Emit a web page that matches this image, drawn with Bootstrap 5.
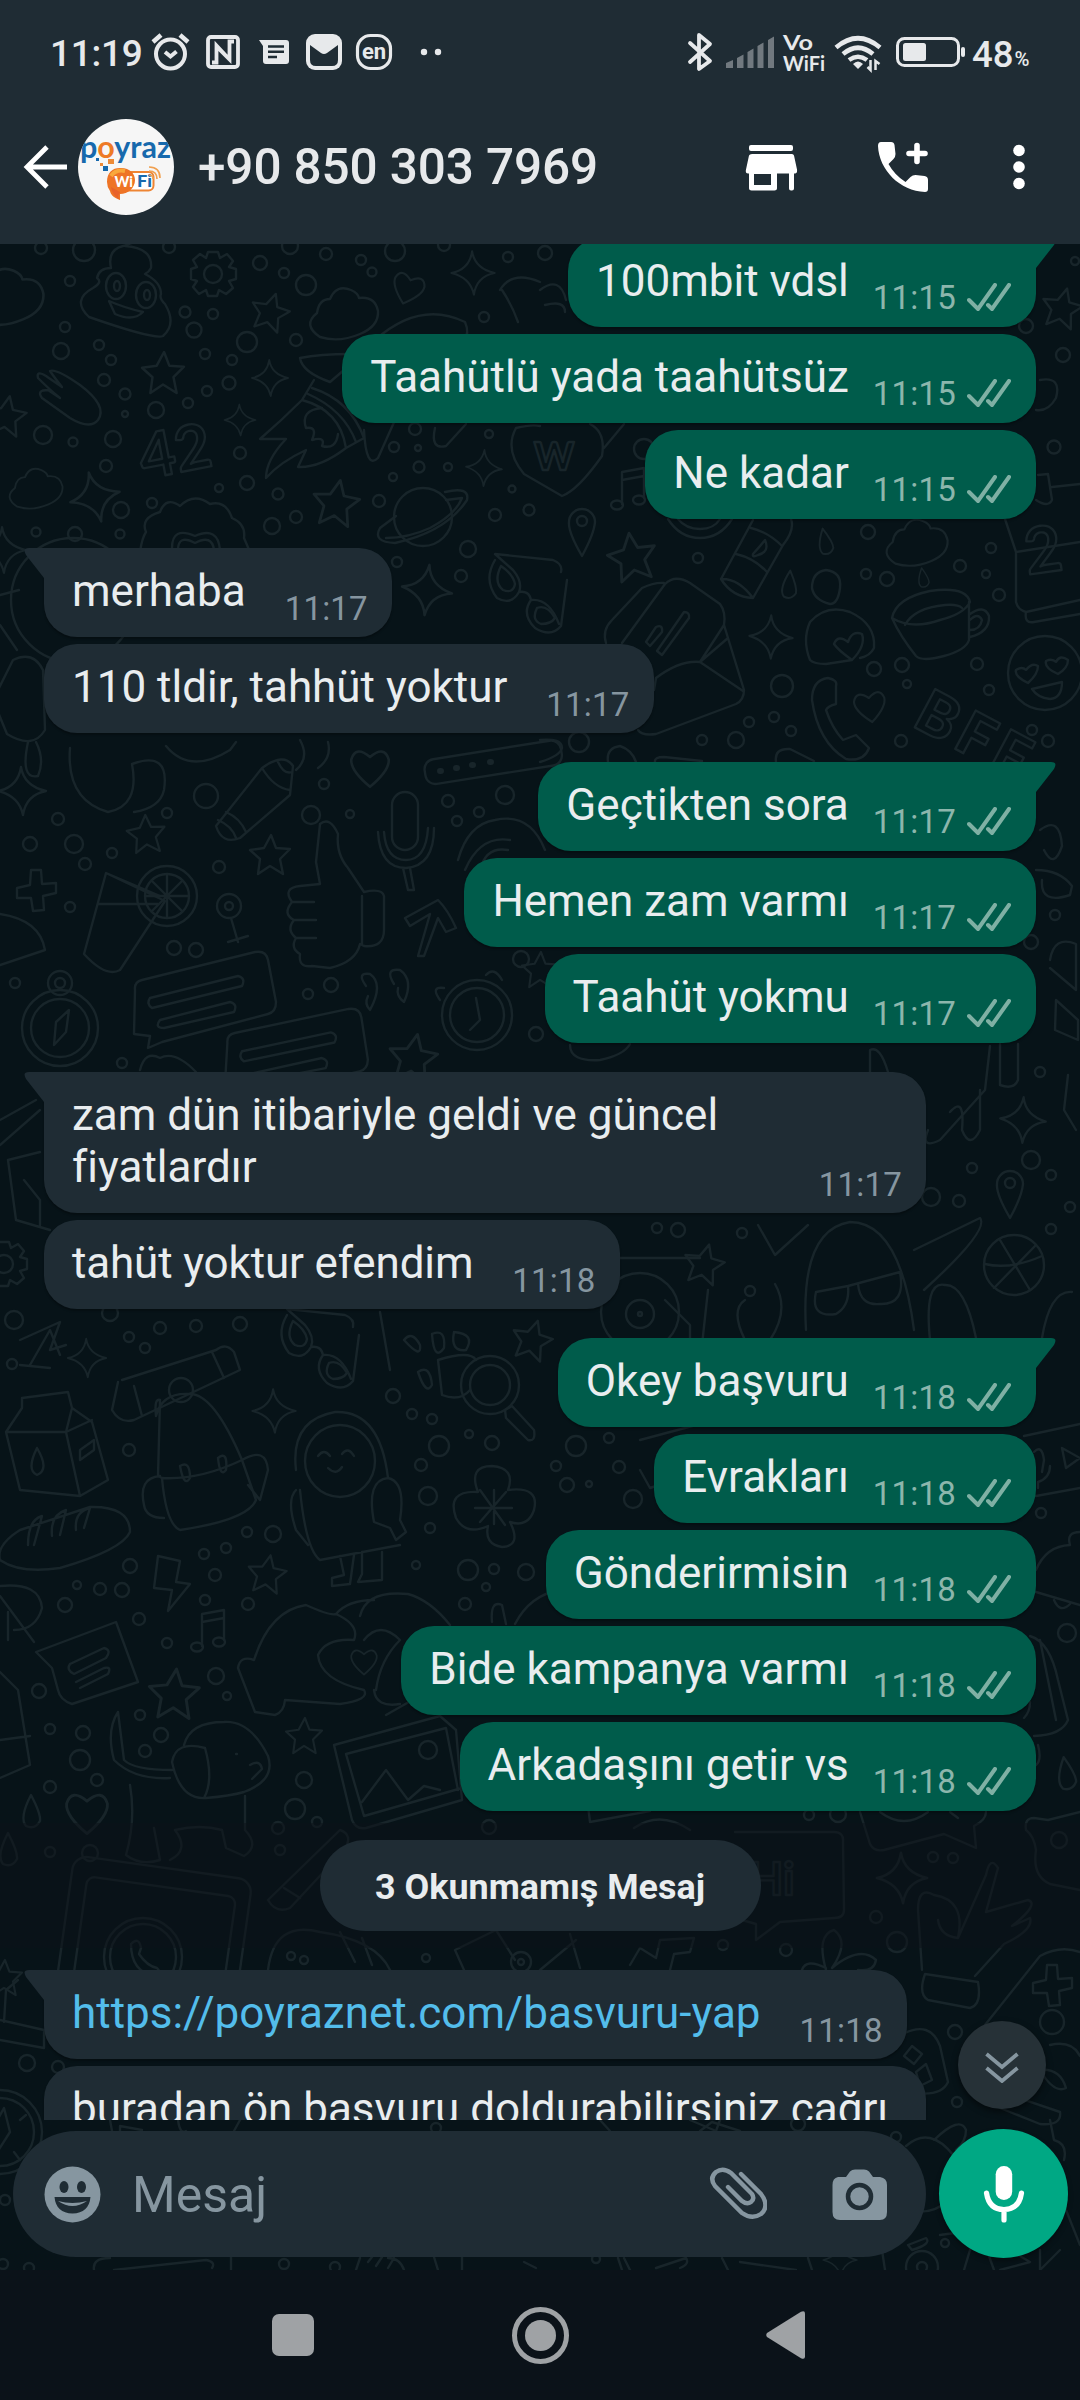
<!DOCTYPE html>
<html lang="tr" data-bs-theme="dark">
<head>
<meta charset="utf-8">
<meta name="viewport" content="width=device-width, initial-scale=1">
<title>Sohbet</title>
<link rel="stylesheet" href="https://cdn.jsdelivr.net/npm/bootstrap@5.3.0/dist/css/bootstrap.min.css">
<style>
  :root { --panel:#1f2c34; --paper:#071318; --out:#005c4b; --ink:#e9edef; --muted:#8696a0; }
  body { width:1080px; height:2400px; margin:0; overflow:hidden; background:#0b1219; color:var(--ink); font-family:Roboto,"Noto Sans",sans-serif; }
  svg { display:block; flex:none; }
  .status-row svg { overflow:visible; }
  .top-panel { background:var(--panel); height:244px; position:relative; z-index:3; color:#e7e9eb; }
  .status-row { height:104px; padding-left:50px; }
  .clock { font-size:37px; font-weight:500; line-height:40px; width:101px; padding-top:4px; letter-spacing:-.3px; }
  .app-row { height:126px; padding-left:20px; }
  .avatar { margin-left:8px; }
  .peer { font-size:49.5px; font-weight:500; line-height:58px; margin-left:24px; width:547px; white-space:nowrap; letter-spacing:-.12px; }
  .chat { height:2026px; background:var(--paper); overflow:hidden; }
  .doodles { position:absolute; left:0; top:0; fill:none; stroke:#18252a; stroke-width:2.4; stroke-linejoin:round; stroke-linecap:round; }
  .feed { height:1876px; overflow:hidden; position:relative; padding:0 44px; margin-top:0; }
  .feed-inner { margin-top:-6px; gap:7px; }
  .bubble { background:var(--panel); border-radius:33px; padding:17px 24px 0 28px; position:relative; box-shadow:0 2px 2px rgba(0,0,0,.28); min-height:89px; flex:none; }
  .bubble.sent { background:var(--out); align-self:flex-end; padding-right:25px; }
  .bubble.received { align-self:flex-start; }
  .bubble p { font-size:44px; line-height:52px; margin:0 0 20px; white-space:nowrap; }
  .bubble p.snug { letter-spacing:-.15px; }
  .stamp { font-size:33px; line-height:39px; margin:0 0 9px 39px; color:var(--muted); letter-spacing:.2px; }
  .sent .stamp { color:#8cb6ac; margin-left:24px; margin-bottom:10px; }
  .sent .stamp svg { margin-left:11px; margin-bottom:2px; }
  .turn { margin-top:22px; }
  .received.turn { border-top-left-radius:0; }
  .sent.turn { border-top-right-radius:0; }
  .tail { position:absolute; top:0; width:30px; height:30px; }
  .received .tail { left:-20px; fill:var(--panel); }
  .sent .tail { right:-20px; fill:var(--out); }
  .wide { width:882px; }
  .unread { margin:22px -44px 32px; position:relative; }
  .unread::before { content:""; position:absolute; inset:-17px 0; background:rgba(12,17,23,.5); }
  .unread span { position:relative; background:var(--panel); width:441px; height:91px; border-radius:46px; font-size:35.9px; font-weight:700; line-height:95px; text-align:center; }
  .chat-link { color:#53bdeb; text-decoration:none; }
  .composer { position:relative; padding:9px 12px 0 13px; }
  .entry { width:913px; height:126px; border-radius:63px; background:var(--panel); padding-left:31px; padding-right:38px; margin-top:2px; color:var(--muted); font-size:50px; }
  .entry .hint { margin-left:31px; padding-top:3px; }
  .mic-btn { width:129px; height:129px; border-radius:50%; background:#00a884; box-shadow:0 3px 5px rgba(0,0,0,.35); }
  .jump-btn { position:absolute; right:34px; top:1777px; width:88px; height:88px; border-radius:50%; background:#263137; box-shadow:0 3px 6px rgba(0,0,0,.5); }
  .sys-nav { height:130px; padding:0 275px 0 272px; fill:#9fa2a5; }
</style>
<script src="https://cdn.jsdelivr.net/npm/bootstrap@5.3.0/dist/js/bootstrap.bundle.min.js"></script>
</head>
<body>
<svg width="0" height="0" class="position-absolute">
  <defs>
    <symbol id="ticks" viewBox="0 0 44 28"><path d="M2 17L11 26L28 2M21 22L25 26L42 2" fill="none" stroke="#7fb0a4" stroke-width="4" stroke-linecap="round"/></symbol>
    <symbol id="tail-l" viewBox="0 0 30 30"><path d="M30 0H5Q-2 0 2 7L20 30H30Z"/></symbol>
    <symbol id="tail-r" viewBox="0 0 30 30"><path d="M0 0H25Q32 0 28 7L10 30H0Z"/></symbol>
  </defs>
</svg>

<header class="top-panel">
  <div class="status-row d-flex align-items-center">
    <div class="clock">11:19</div>
    <svg width="40" height="40" viewBox="151 32 40 40" fill="none" stroke="#e7e9eb"><circle cx="170.500" cy="54" r="14.500" stroke-width="4"/><path d="M165 52l5.500 4.500 6-5" stroke-width="4"/><path d="M153 42l8-7M188 42l-8-7" stroke-width="4.500"/></svg>
    <svg style="margin-left:14px" width="36" height="40" viewBox="205 32 36 40" fill="none" stroke="#e7e9eb"><rect x="208" y="37" width="30" height="30" rx="3" stroke-width="3.800"/><path d="M212 62.500h4.500v-17l13 14M234 41.500h-4.500v18l-13-13" stroke-width="3.800"/></svg>
    <svg style="margin-left:18px" width="31" height="40" viewBox="259 32 31 40"><path fill="#e7e9eb" d="M259 40h27q3 0 3 3v18q0 3-3 3h-20q-3 0-3-3V46z"/><path d="M268 46.500h16M268 51.700h16M268 57h9" stroke="#1f2c34" stroke-width="2.500"/></svg>
    <svg style="margin-left:16px" width="36" height="40" viewBox="306 32 36 40"><rect x="306" y="34" width="36" height="36" rx="9" fill="#e7e9eb"/><path d="M310 45L321 53Q324 55 327 53L338 45V60Q338 66 332 66H316Q310 66 310 60Z" fill="#1f2c34"/></svg>
    <svg style="margin-left:14px" width="36" height="40" viewBox="356 32 36 40"><rect x="357.500" y="35.500" width="33" height="33" rx="13" fill="none" stroke="#e7e9eb" stroke-width="3.200"/><text x="374" y="58.500" text-anchor="middle" font-family="Roboto" font-weight="700" font-size="22" fill="#e7e9eb">en</text></svg>
    <svg style="margin-left:28px" width="24" height="40" viewBox="420 32 24 40" fill="#e7e9eb"><circle cx="424" cy="52" r="3.200"/><circle cx="438" cy="52" r="3.200"/></svg>
    <svg style="margin-left:243px" width="26" height="40" viewBox="687 32 26 40" fill="none" stroke="#e7e9eb" stroke-width="3.800" stroke-linecap="round" stroke-linejoin="round"><path d="M690 43L710 61L699 69V35L710 44L690 62"/></svg>
    <svg style="margin-left:13px" width="48" height="40" viewBox="726 32 48 40" fill="#71797f"><path d="M726 63l7-3v8h-7zM737 58l6.500-3.500V68H737zM747.500 52l6-3.500V68h-6zM757.500 46l6-3.500V68h-6zM768 40l6-3.500V68h-6z"/></svg>
    <svg style="margin-left:9px" width="43" height="40" viewBox="783 32 43 40" fill="#e7e9eb" font-family="Lato" font-weight="700"><text x="783" y="49.500" font-size="21" textLength="30" lengthAdjust="spacingAndGlyphs">Vo</text><text x="783" y="70.500" font-size="21" textLength="42" lengthAdjust="spacingAndGlyphs">WiFi</text></svg>
    <svg style="margin-left:8px" width="48" height="40" viewBox="834 32 48 40" fill="none" stroke="#e7e9eb" stroke-width="4.600"><path d="M836 47.500Q858 29 880 47.500M843 54Q858 41.500 873 54M849 60Q858 53.500 867 60"/><path d="M858 69l-5-5q5-5 10 0z" fill="#e7e9eb" stroke="none"/><path d="M870.500 60v10l-3-3M875.500 70v-9l4 3" stroke-width="2.500"/></svg>
    <svg style="margin-left:14px" width="70" height="40" viewBox="896 32 70 40"><rect x="897.500" y="38.500" width="61" height="27" rx="7" fill="none" stroke="#e7e9eb" stroke-width="3"/><rect x="903" y="43" width="23" height="18" rx="2.500" fill="#e7e9eb"/><rect x="961" y="47" width="4" height="10" rx="2" fill="#e7e9eb"/></svg>
    <svg style="margin-left:6px" width="62" height="40" viewBox="972 32 62 40" fill="#e7e9eb" font-family="Roboto" font-weight="500"><text x="972" y="67" font-size="36.500">48</text><text x="1014.500" y="66" font-size="20" textLength="15" lengthAdjust="spacingAndGlyphs">%</text></svg>
  </div>
  <div class="app-row d-flex align-items-center">
    <svg width="50" height="50" viewBox="20 142 50 50" fill="none" stroke="#fff" stroke-width="4.800"><path d="M67 167H27M47 147L27 167L47 187" /></svg>
    <svg class="avatar rounded-circle" width="96" height="96" viewBox="78 119 96 96">
      <rect x="78" y="119" width="96" height="96" fill="#f6f6f6"/>
      <text x="80" y="157.500" font-family="Lato" font-weight="700" font-size="30" fill="#1769ad" textLength="91" lengthAdjust="spacingAndGlyphs">p<tspan fill="#ee7a26">o</tspan>yraz</text>
      <path d="M96 158h3v3h-3zM103 166h5v5h-5z" fill="#1769ad"/><path d="M108 159h6v5h-6zM100 163h3v3h-3z" fill="#ee8a36"/>
      <rect x="122" y="172" width="31.500" height="18.500" rx="5" fill="#fff" stroke="#ee8534" stroke-width="2"/>
      <path d="M107 182C107 172 113 167.500 121 168C130 168 135 174 135 180C135 188 128 194 120 194V200C113 197 111 195 110 191Q107 187 107 182Z" fill="#ee7426"/>
      <path d="M111 187Q112 195 120 200C116 196 120 194 120 192Z" fill="#e8622a"/>
      <path d="M111 176Q116 169 125 171" stroke="#f9a83c" stroke-width="4" fill="none"/>
      <text x="114.500" y="187" font-family="Lato" font-weight="900" font-size="15" fill="#fff" textLength="18.500" lengthAdjust="spacingAndGlyphs">Wi</text>
      <text x="137" y="187" font-family="Lato" font-weight="900" font-size="16" fill="#1769ad" textLength="15" lengthAdjust="spacingAndGlyphs">Fi</text>
      <path d="M149 175q4 0 4 4M149 171q8 0 8 8M149 167q11 0 11 11" fill="none" stroke="#f0a050" stroke-width="1.700"/>
    </svg>
    <div class="peer">+90 850 303 7969</div>
    <svg style="margin-left:-1px" width="54" height="50" viewBox="744 142 54 50" fill="#fff"><rect x="749" y="145" width="44" height="6" rx="2"/><path d="M750 154h42q1.500 0 2 1.500l3 14q.5 4-2 4h-1v15q0 2-2 2h-1q-2 0-2-2v-15h-12v15q0 2-2.500 2h-23q-2.500 0-2.500-2v-15h-1q-3 0-2-4l3-14q.5-1.500 3-1.500zM754 174v11h17v-11z" fill-rule="evenodd"/></svg>
    <svg style="margin-left:79px" width="54" height="52" viewBox="877 141 54 52" fill="#fff"><path d="M881 142h10q3 0 3.500 3l1 9q0 3-2 5l-5 5q6 11 17 18l5-5q2-2 5-2l9 1q3.500.5 3.500 4v9q0 3-3 3c-25-1-46-22-47-46q0-4 3-4z"/><path d="M917 145.500v16M909 153.500h16" stroke="#fff" stroke-width="5.600" stroke-linecap="round"/></svg>
    <svg style="margin-left:78px" width="20" height="50" viewBox="1009 142 20 50" fill="#fff"><circle cx="1019" cy="150.500" r="5.800"/><circle cx="1019" cy="167" r="5.800"/><circle cx="1019" cy="183.500" r="5.800"/></svg>
  </div>
</header>

<main class="chat position-relative">
  <svg class="doodles" id="paper" width="1080" height="2026" viewBox="0 244 1080 2026">
    <defs>
      <path id="star" d="M1-20L6-7L20-6L10 4L13 19L0 11L-12 19L-10 4L-20-5L-6-7Z"/>
      <path id="spark" d="M-1-24Q2-5 24 0Q4 4 1 24Q-3 5-24 0Q-4-4-1-24Z"/>
      <path id="cloud" d="M-27 0Q-25-14-14-14Q-8-29 7-23Q14-20 15-15Q31-17 34-2Q35 13 16 21Q-5 30-24 24Q-42 12-27 0Z"/>
      <path id="heart" d="M0 18Q-18 3-17-7Q-13-20 0-9Q13-20 17-7Q18 3 0 18Z"/>
      <path id="gear" d="M-5-22L5-22L7-16L14-20L20-13L16-7L23-5V5L16 7L20 14L13 20L6 16L4 22H-5L-7 16L-14 20L-20 13L-16 7L-22 5V-5L-16-7L-20-14L-13-20L-7-16ZM9 0A9 9 0 1 1-9 0A9 9 0 1 1 9 0"/>
      <g id="glasses"><path d="M-38-30Q-50-10-36 8Q-22 16-14 2Q-10-8-20-20L-38-36L20-30Q30-26 28-18M-14 2Q-4 0-2 10M-2 10Q-12 24 2 38Q18 48 28 36L34-10M-2 10Q16 8 26 34"/><path d="M-32-24Q-40-8-30 0Q-20 4-18-6Q-20-16-32-24M4 18Q-2 30 8 34Q18 34 22 28Q14 14 4 18"/></g>
      <g id="card"><path d="M-65-10Q-66-18-58-20L55-48Q66-50 68-40L76 2Q76 12 68 14L-38 42L-52 48L-50 36L-66 34Z"/><path d="M-50-2L38-24Q46-22 42-14L-48 8Q-54 4-50-2M-40 20L30 2Q38 4 34 12L-36 28Q-46 28-40 20"/></g>
      <g id="thumb"><path d="M-42-20Q-52-8-40-2Q-48 8-38 16Q-44 26-34 32Q-36 46-22 44L-4 46Q22 40 26 22L30 24Q50 26 50 8L50-26Q48-34 30-30L14-54Q2-68 4-88Q-4-106-14-98L-18-60L-14-38L-34-36Q-52-34-42-20H-20M-40-2H-18M-38 16H-18M28-26V22"/></g>
      <g id="note"><path d="M-8 14V-18L14-22V8M-8-10L14-14"/><ellipse cx="-13" cy="15" rx="6" ry="4.500"/><ellipse cx="9" cy="10" rx="6" ry="4.500"/></g>
      <g id="pin"><path d="M0 28Q-14 4-13-6A13 13 0 1 1 13-6Q12 6 0 28Z"/><circle cy="-7" r="5"/></g>
      <path id="drop" d="M0-17Q10 2 9 9Q4 18-5 14Q-12 6 0-17Z"/>
      <g id="micro"><rect x="-14" y="-48" width="26" height="58" rx="13"/><path d="M-28-8Q-26 28 0 28Q28 26 28-12M-22-8Q-20 20 0 20Q20 20 22-12M-3 28L2 50H8L4 28"/></g>
      <path id="plusd" d="M-5-20L5-20L6-6L20-7V3L7 6L8 20L-3 21L-5 8L-19 8L-19-2L-6-5Z"/>
      <g id="phone"><rect x="-90" y="-75" width="180" height="140" rx="14" transform="rotate(8)"/><rect x="-74" y="-56" width="150" height="110" rx="8" transform="rotate(8)"/><circle cx="-10" cy="15" r="39"/><circle cx="-10" cy="15" r="33"/><path d="M-22 2Q-14-6-12 6L-14 12Q-6 24 4 26Q10 32 2 34Q-22 30-22 2"/></g>
    </defs>
    <g id="bits"></g>
    <!-- upper area -->
    <g transform="translate(125 290)"><path d="M0-44Q28-42 26-22Q24-18 20-16Q36-8 36 4Q34 8 40 14Q52 34 38 46Q30 50-36 27Q-54 10-32-2Q-22-8-28-12Q-26-22-14-22Q-18-40-2-44Q6-46 16-52"/><ellipse cx="-9" cy="-4" rx="10" ry="13"/><ellipse cx="21" cy="5" rx="10" ry="13"/><ellipse cx="-8" cy="-4" rx="3" ry="5"/><ellipse cx="22" cy="5" rx="3" ry="5"/><path d="M-16 11Q0 18 18 22Q8 32-10 24Z"/></g>
    <path d="M38 378Q36 370 46 376L62 387Q54 377 50 371Q56 368 80 385Q108 406 98 420Q90 430 70 418L42 398Q36 390 48 390L60 398Q50 390 38 378"/>
    <text x="142" y="478" font-family="Lato" font-weight="700" font-size="62" transform="rotate(-11 150 470)">42</text>
    <path d="M375 340Q420 300 465 322Q475 345 440 350M300 358Q320 354 350 354M300 358Q302 372 330 382L344 370M314 380L302 400Q282 420 260 439H286Q266 460 266 478Q280 462 306 450L298 467Q320 468 346 448Q340 410 302 400M346 448L364 438Q350 400 312 388M356 442Q344 410 308 394M364 430Q366 470 378 458L395 420M435 428Q430 450 446 446L466 424M322 408Q300 410 306 428Q318 426 312 440Q326 436 322 446Q336 450 338 434"/>
    <path d="M140 552Q142 538 146 532Q140 518 160 512Q166 496 180 506Q194 492 210 504Q226 500 232 518Q246 524 244 538L250 552M172 548Q172 526 195 536Q218 526 220 550M178 550Q178 534 195 543Q212 534 214 550"/>
    <g><circle cx="423" cy="517" r="29"/><path d="M445 492Q470 486 467 500Q446 532 395 543Q372 542 380 528L396 516M446 500L462 498Q456 514 430 528Q408 538 386 538"/></g>
    <use href="#glasses" x="533" y="590"/><use href="#micro" x="406" y="840"/>
    <path d="M540 290Q560 275 566 300M500 290Q512 270 540 282M502 290Q512 305 518 322M545 305Q565 300 565 312M540 426Q532 424 516 428Q504 450 524 474L562 496Q578 490 602 456Q606 432 590 424M604 448L624 424"/>
    <text x="534" y="470" font-family="Lato" font-weight="900" font-size="38">W</text>
    <use href="#note" x="630" y="490"/><use href="#pin" x="582" y="528"/>
    <path d="M668 519Q680 538 700 538Q720 538 732 519M678 519Q686 529 700 529Q714 529 720 519M753 520L721 579Q732 597 753 598L783 545Q795 530 791 519M751 528Q768 532 782 546M736 554Q754 558 767 572M721 579Q738 578 753 598M753 554Q762 544 765 540Q770 552 758 555Q752 558 753 554"/>
    <path d="M606 643Q602 630 612 620L642 588Q655 582 664 583M622 643L665 584Q675 574 690 583L720 604Q726 612 724 625L700 662Q680 660 656 678L654 690M724 625L744 690Q744 700 736 704L656 734Q642 736 638 730M700 662L743 691M700 662L728 638M646 642L656 627Q663 624 662 632L650 646ZM657 651L684 612Q690 612 689 618L662 655Z"/>
    <path d="M826 570Q842 572 840 588Q838 604 830 604Q814 600 812 588Q812 572 826 570M810 660Q802 640 810 622Q826 604 850 612Q876 624 874 648Q870 656 860 658M852 660L826 664Q814 664 810 660M852 660Q838 650 834 644Q838 634 848 642Q852 630 862 634Q866 646 852 660"/>
    <path d="M892 618Q896 598 930 591Q966 586 970 602Q964 614 940 620Q912 630 892 618Q900 636 916 656Q922 662 944 656Q966 650 969 640V602M905 625Q914 608 945 605Q958 604 962 608M970 614Q984 604 989 616Q990 632 970 637M970 620Q978 612 982 620Q980 630 970 630"/>
    <path d="M812 700Q812 680 828 678Q838 680 836 686V704Q828 706 826 710Q832 728 843 740L856 735L869 748Q864 762 846 759Q818 742 812 700"/>
    <path d="M1005 519L1016 552V602Q1018 610 1026 612L1080 600M1016 552L1080 542M1026 612Q1024 624 1034 622L1080 614"/>
    <text x="1026" y="572" font-family="Lato" font-weight="700" font-size="64" transform="rotate(-8 1046 560)">2</text>
    <g transform="rotate(28 910 735)"><text x="906" y="726" font-family="Lato" font-weight="900" font-size="60" letter-spacing="6">BFF</text></g>
    <path d="M1038 475L1048 474L1052 500Q1048 508 1036 500M1052 487L1080 484M1040 380Q1062 376 1056 398Q1048 412 1036 410"/>
    <circle cx="1045" cy="673" r="37"/><path d="M1032 689L1062 682Q1062 698 1050 699Q1038 698 1032 689M1028 683Q1014 676 1016 670Q1022 666 1026 670Q1032 662 1038 666Q1038 674 1028 683M1058 674Q1044 668 1046 661Q1052 658 1056 662Q1060 654 1068 660Q1068 668 1058 674"/>
    <path d="M540 740Q562 738 562 748Q560 756 540 762M608 762Q606 748 620 746Q632 750 636 762M655 762Q654 757 664 757L702 761M776 762Q774 748 790 749L814 761"/>
    <g transform="translate(33 600)"><circle r="62" cx="40"/><path d="M-40 100L-20 60Q0 50 10 70L12 130Q0 150-26 134ZM-33-5L-14-10M-33 25L-16 50"/></g>
    <path d="M36 742Q45 760 38 776Q20 780 28 742M70 748Q66 800 108 812Q140 806 132 764M132 764Q170 750 164 790Q160 808 134 812M166 746Q190 775 230 750L236 742M300 740Q310 758 296 770M328 742Q332 758 318 768"/>
    <path d="M216 826L262 768Q284 752 293 766L290 795L240 838Q222 845 216 826M262 768Q274 788 290 790M226 812Q240 818 246 832M218 820Q232 826 236 838M278 762Q284 775 292 772"/>
    <rect x="424" y="750" width="138" height="25" rx="10" transform="rotate(-9 492 761)"/><path d="M440 771h1M456 768h1M472 765h1M490 762h1" stroke-width="6"/>
    <use href="#thumb" x="334" y="922"/>
    <g><path d="M106 873L165 901L120 970Q106 978 84 954ZM98 904H158M106 873L160 896"/><circle cx="167" cy="896" r="30"/><circle cx="167" cy="896" r="22"/><path d="M167 874V918M145 896H189M152 881L182 911M182 881L152 911"/></g>
    <circle cx="229" cy="906" r="12"/><circle cx="229" cy="906" r="4"/><path d="M231 918L238 942M228 942L248 936M405 918L438 900Q448 910 456 928L446 932L438 918L424 956H418L430 914L410 926Z"/>
    <use href="#plusd" x="36" y="890"/><path d="M0 914Q40 920 45 950L0 965"/>
    <use href="#card" x="200" y="1000"/><use href="#card" x="292" y="1055" transform="rotate(2 292 1055)"/>
    <g><circle cx="477" cy="1015" r="35"/><circle cx="477" cy="1015" r="27"/><path d="M476 998L480 1020L470 1030M440 1000Q430 986 444 988M486 975Q494 966 502 980"/></g>
    <g><circle cx="60" cy="1028" r="38"/><circle cx="60" cy="1028" r="29"/><circle cx="60" cy="983" r="12"/><circle cx="60" cy="983" r="5"/><path d="M69 1010L66 1032L54 1045L56 1022Z"/></g>
    <path d="M366 986Q356 972 370 974Q384 984 370 1010Q364 1004 368 996M394 984Q384 968 400 970Q414 980 404 1002Q396 996 398 988"/>
    <path d="M458 860Q468 824 495 820Q530 812 545 850M465 870Q480 835 510 840M480 870Q486 846 508 850M140 1070Q145 1050 160 1058Q175 1050 196 1072M1040 830Q1060 815 1062 846Q1054 870 1044 850M1036 870Q1060 870 1072 886L1070 895Q1040 905 1042 880M1050 960Q1054 935 1076 944V990L1050 968M1056 1000L1078 1020V1040L1055 1030Z"/>
    <path d="M570 1045Q570 1062 600 1060Q624 1055 630 1044M870 1072V1050Q880 1045 888 1072M1000 1044V1085Q1014 1090 1018 1080V1044M990 1046L985 1090L940 1140Q920 1150 928 1130M950 1112Q965 1095 962 1130Q970 1150 980 1130V1090M1068 1075L1064 1110L1076 1130"/>
    <path d="M0 1120L36 1100M0 1145L40 1110M8 1160L40 1152M8 1160L16 1220L50 1230M24 1180L40 1200V1225"/>
    <use href="#gear" x="4" y="1264"/><use href="#pin" x="1010" y="1190"/>
    <g><circle cx="1014" cy="1265" r="30"/><path d="M1000 1240L1030 1290M1036 1245L994 1288M985 1264Q1010 1270 1042 1256"/></g>
    <path d="M806 1330Q800 1230 850 1222Q900 1222 914 1330M816 1292Q810 1318 836 1314Q850 1306 848 1286L816 1292M848 1286L900 1272Q906 1305 880 1304Q860 1306 858 1284M914 1250L980 1218Q990 1230 924 1290M930 1340Q924 1280 945 1285Q965 1284 976 1338M745 1340Q730 1310 745 1300M770 1340Q790 1310 775 1284M1042 1338Q1050 1290 1072 1292M758 1225L775 1255L808 1225"/>
    <circle cx="640" cy="1312" r="39"/><circle cx="640" cy="1314" r="14"/><circle cx="640" cy="1314" r="2"/><path d="M665 1300L690 1325V1345M620 1258H700M708 1290L702 1345"/>
    <use href="#glasses" x="325" y="1345"/><path d="M380 1312L390 1370M20 1340L60 1322L50 1350L66 1345M30 1365L50 1330L60 1355M20 1365L50 1368"/>
    <g><path d="M118 1382L112 1410Q120 1424 134 1420L240 1370L234 1352Q226 1342 216 1350L122 1380M134 1386L142 1416M212 1352L224 1378"/><path d="M160 1400Q154 1398 156 1416Q162 1392 190 1394Q214 1394 242 1460Q266 1446 268 1470L260 1500L248 1485M242 1460L256 1500Q248 1520 180 1530Q166 1524 162 1478L158 1476Q160 1400 160 1400M162 1478Q200 1480 242 1460M160 1476Q138 1478 144 1505Q146 1518 164 1518M180 1466Q190 1460 190 1478Q184 1488 180 1466M218 1458Q228 1450 226 1470Q220 1478 218 1458"/><circle cx="181" cy="1390" r="12"/></g>
    <path d="M22 1398L68 1392L72 1408L92 1422L108 1480L80 1496L20 1490L6 1432L22 1408ZM6 1432L66 1432L92 1420M66 1432L80 1496M66 1432L72 1408M37 1448Q26 1470 37 1475Q50 1470 37 1448M80 1450L94 1440V1450L80 1460Z"/>
    <path d="M296 1470Q290 1420 335 1412Q380 1410 388 1478M388 1478Q406 1482 400 1520L406 1532L396 1540L390 1528L374 1522Q366 1480 388 1478M400 1545L320 1560Q306 1550 300 1490M296 1490Q286 1500 296 1530L308 1545M340 1556L344 1575L332 1578V1586L350 1584L354 1555M362 1552V1574L358 1582L382 1580V1552"/><ellipse cx="340" cy="1461" rx="35" ry="36"/><path d="M318 1456Q324 1448 330 1456M342 1454Q348 1446 354 1456M328 1468Q336 1476 342 1467"/>
    <path d="M478 1492Q468 1466 492 1466Q516 1468 508 1490Q540 1486 534 1510Q528 1528 510 1522Q522 1546 502 1547Q484 1544 488 1526Q466 1536 456 1518Q446 1490 478 1492M480 1490L505 1525M506 1492L480 1522M475 1508H512M494 1490V1524"/>
    <path d="M404 1340Q412 1330 420 1345Q422 1360 404 1340M432 1334Q446 1328 444 1348Q434 1362 432 1334M454 1332Q476 1334 466 1350Q450 1352 454 1332M418 1372Q430 1364 432 1385Q426 1396 418 1372M438 1360Q470 1350 476 1360M438 1360L442 1395Q460 1402 470 1390"/><circle cx="490" cy="1385" r="29"/><circle cx="490" cy="1385" r="20"/><path d="M505 1410L512 1406L534 1430Q536 1442 528 1440L506 1418Z"/>
    <path d="M0 1560Q-4 1545 20 1530L90 1507Q130 1506 130 1532Q122 1550 60 1568Q20 1574 0 1560M28 1545Q28 1520 42 1516L34 1545M52 1536Q50 1515 66 1510L60 1535M76 1530Q74 1512 90 1508L84 1528"/>
    <path d="M158 1556L180 1561L176 1582L190 1584L168 1611L172 1590L154 1588Z"/><use href="#note" x="210" y="1632"/>
    <path d="M36 1652L116 1622L138 1682L72 1704Q60 1700 58 1690L52 1668ZM70 1664L104 1648Q112 1650 106 1658L74 1674Q66 1670 70 1664M76 1682L104 1668Q112 1666 108 1674L80 1688M0 1586Q40 1582 42 1608Q36 1630 14 1630M0 1596L34 1642M8 1612V1640"/>
    <path d="M255 1712L238 1668Q240 1655 254 1660Q270 1610 306 1605Q330 1616 336 1614Q360 1625 354 1640Q326 1638 318 1655Q320 1680 364 1690Q370 1700 340 1704L285 1700Q284 1712 275 1715ZM336 1614Q348 1600 374 1600M360 1616Q366 1590 408 1594Q430 1600 450 1625M376 1690Q380 1660 400 1640Q380 1620 364 1640M374 1690Q376 1708 400 1704M515 1624Q530 1595 560 1590M492 1622Q490 1600 502 1605L506 1624"/>
    <path d="M118 1712Q106 1730 114 1760Q134 1780 170 1778M118 1712L124 1760Q134 1770 172 1770M184 1745Q190 1722 224 1722Q250 1720 268 1756Q276 1780 244 1792Q230 1796 206 1798Q180 1800 172 1762Q176 1740 205 1748Q214 1780 204 1798M130 1785Q136 1820 126 1855Q140 1866 160 1860L154 1828M245 1796V1830Q260 1846 244 1856L226 1848L222 1830Q200 1824 175 1830Q190 1850 170 1860M236 1754h1M250 1765q10-6 12 4l-10 10"/>
    <path d="M334 1745L440 1716L456 1730L462 1800L366 1828Q356 1830 352 1820ZM346 1754L446 1728L458 1790M346 1754L364 1816L462 1788M362 1802L386 1770L408 1800L424 1786L440 1790"/><circle cx="428" cy="1750" r="9"/><path d="M386 1715L430 1690M586 1790L590 1822L650 1811"/>
    <use href="#drop" x="31" y="1812"/><use href="#drop" x="8" y="1850"/>
    <path d="M0 1672L18 1690L30 1765L0 1778M0 1740L30 1736M635 1420Q640 1400 660 1400M640 1440L700 1424M640 1470L650 1488L656 1486M1024 1436L1080 1424M1034 1452Q1042 1444 1044 1460L1042 1472M1050 1466Q1050 1478 1038 1482V1488M1036 1496L1080 1488M1062 1448L1080 1458L1066 1468ZM1036 1570Q1046 1546 1070 1545M1070 1545Q1066 1532 1080 1532M1036 1592L1080 1605M1054 1600Q1060 1614 1070 1604M1030 1636Q1050 1642 1058 1680L1068 1720Q1062 1735 1034 1736M1040 1640L1056 1720M1024 1718Q1030 1712 1030 1702M1038 1745Q1042 1760 1036 1765"/>
    <use href="#drop" x="1066" y="1774" transform="rotate(-8 1066 1774)"/>
    <!-- lower area -->
    <use href="#phone" x="153" y="1942"/>
    <path d="M268 1900L340 1830Q354 1835 344 1850L290 1908Q276 1914 268 1900M284 1888L300 1898M268 1970Q274 1920 320 1932Q376 1940 390 1970M340 1932L355 1962M362 1938L372 1965M455 1950L496 1930L515 1960M455 1950L464 1970M570 1934L580 1968M576 1940L540 1970M634 1828Q660 1810 690 1830M630 1965L640 1948L656 1958L660 1940L694 1938L690 1952L674 1954L670 1970"/>
    <circle cx="521" cy="1962" r="10"/><circle cx="521" cy="1962" r="3"/>
    <path d="M735 1832H834Q844 1832 843 1842L844 1910Q844 1918 834 1918L780 1922L756 1940V1924L735 1918M860 1812L870 1844Q874 1852 884 1850L944 1834L976 1848L974 1826Q986 1820 986 1812M880 1812Q904 1830 928 1812M950 1812L958 1818M1026 1830Q1024 1818 1034 1818L1048 1820L1080 1812M1026 1830Q1034 1836 1036 1850M1036 1850Q1032 1876 1050 1884L1080 1890"/>
    <circle cx="1059" cy="1840" r="8"/>
    <text x="748" y="1895" font-family="Lato" font-weight="700" font-size="46">Hi</text>
    <path d="M922 1970L918 1910Q918 1886 934 1895Q966 1900 958 1938Q940 1936 938 1920M958 1938L986 1875Q990 1855 998 1868L986 1912L1028 1900Q1040 1904 1012 1926L1030 1918Q1034 1930 1004 1944L975 1976M925 1974L978 1982Q982 2005 970 2008L928 2000Q918 1994 925 1974Z"/>
    <path d="M985 2025L1040 1956Q1060 1945 1080 1952M1050 2045Q1072 2040 1080 2056M1040 2070Q1060 2068 1066 2088Q1054 2094 1040 2070"/><use href="#plusd" x="1052" y="1985"/>
    <path d="M826 1970Q816 1935 834 1930Q850 1942 832 1968Q860 1945 876 1960Q874 1972 858 1970M826 1968Q806 1958 802 1970M903 2034Q930 2020 940 2046L948 2082Q940 2100 900 2090M904 2056L912 2046L922 2054L914 2064ZM916 2072L926 2064L932 2080L920 2086ZM1010 2095L1060 2112Q1062 2126 1040 2124L1000 2108"/>
    <path d="M0 2020L44 2030V2048L0 2040M4 2022L6 1990L18 1980"/>
    <circle cx="0" cy="2132" r="42"/><circle cx="0" cy="2132" r="34"/><path d="M-4 2154L10 2132L4 2108L-8 2130M20 2120L26 2115M14 2152L20 2160"/>
    <path d="M112 2131L110 2120M120 2131V2126L142 2130M178 2120Q180 2135 186 2131M240 2120L234 2131M600 2120L610 2131M690 2120L716 2131L720 2120M700 2131L712 2122L740 2131M906 2146Q930 2125 954 2156L950 2200Q930 2216 910 2210M934 2140Q960 2115 966 2130Q966 2142 956 2150M1050 2120L1054 2140Q1068 2144 1064 2160M940 2235L976 2230L964 2270M885 2270L882 2250M908 2245L926 2238Q932 2244 912 2250ZM1058 2190L1080 2245M985 2245L994 2270M1010 2250L1030 2262L1000 2270M1040 2250V2270L1060 2250"/>
    <path d="M94 2270Q92 2258 110 2258M114 2270L206 2260Q216 2262 212 2268M231 2257V2270M356 2270L360 2258M368 2262L372 2257M376 2266L382 2257M388 2268L394 2258M404 2270Q400 2258 388 2258M434 2257L438 2270M462 2257L462 2270M524 2262L536 2268M622 2270L618 2258M630 2270L624 2258M656 2268L686 2258Q690 2264 680 2268M722 2258L728 2270M740 2262L796 2270M812 2270L808 2258"/>
    <circle cx="922" cy="2267" r="16"/><circle cx="922" cy="2267" r="5"/>
  </svg>

  <section class="feed">
    <div class="feed-inner d-flex flex-column">
      <div class="bubble sent d-flex align-items-end turn mt-0"><svg class="tail"><use href="#tail-r"/></svg><p>100mbit vdsl</p><div class="stamp d-flex align-items-center">11:15<svg width="44" height="28"><use href="#ticks"/></svg></div></div>
      <div class="bubble sent d-flex align-items-end"><p>Taahütlü yada taahütsüz</p><div class="stamp d-flex align-items-center">11:15<svg width="44" height="28"><use href="#ticks"/></svg></div></div>
      <div class="bubble sent d-flex align-items-end"><p>Ne kadar</p><div class="stamp d-flex align-items-center">11:15<svg width="44" height="28"><use href="#ticks"/></svg></div></div>
      <div class="bubble received d-flex align-items-end turn"><svg class="tail"><use href="#tail-l"/></svg><p>merhaba</p><div class="stamp">11:17</div></div>
      <div class="bubble received d-flex align-items-end"><p>110 tldir, tahhüt yoktur</p><div class="stamp">11:17</div></div>
      <div class="bubble sent d-flex align-items-end turn"><svg class="tail"><use href="#tail-r"/></svg><p>Geçtikten sora</p><div class="stamp d-flex align-items-center">11:17<svg width="44" height="28"><use href="#ticks"/></svg></div></div>
      <div class="bubble sent d-flex align-items-end"><p>Hemen zam varmı</p><div class="stamp d-flex align-items-center">11:17<svg width="44" height="28"><use href="#ticks"/></svg></div></div>
      <div class="bubble sent d-flex align-items-end"><p>Taahüt yokmu</p><div class="stamp d-flex align-items-center">11:17<svg width="44" height="28"><use href="#ticks"/></svg></div></div>
      <div class="bubble received wide d-flex align-items-end justify-content-between turn"><svg class="tail"><use href="#tail-l"/></svg><p>zam dün itibariyle geldi ve güncel<br>fiyatlardır</p><div class="stamp">11:17</div></div>
      <div class="bubble received d-flex align-items-end"><p class="snug">tahüt yoktur efendim</p><div class="stamp">11:18</div></div>
      <div class="bubble sent d-flex align-items-end turn"><svg class="tail"><use href="#tail-r"/></svg><p>Okey başvuru</p><div class="stamp d-flex align-items-center">11:18<svg width="44" height="28"><use href="#ticks"/></svg></div></div>
      <div class="bubble sent d-flex align-items-end"><p>Evrakları</p><div class="stamp d-flex align-items-center">11:18<svg width="44" height="28"><use href="#ticks"/></svg></div></div>
      <div class="bubble sent d-flex align-items-end"><p>Gönderirmisin</p><div class="stamp d-flex align-items-center">11:18<svg width="44" height="28"><use href="#ticks"/></svg></div></div>
      <div class="bubble sent d-flex align-items-end"><p>Bide kampanya varmı</p><div class="stamp d-flex align-items-center">11:18<svg width="44" height="28"><use href="#ticks"/></svg></div></div>
      <div class="bubble sent d-flex align-items-end"><p>Arkadaşını getir vs</p><div class="stamp d-flex align-items-center">11:18<svg width="44" height="28"><use href="#ticks"/></svg></div></div>
      <div class="unread d-flex justify-content-center"><span>3 Okunmamış Mesaj</span></div>
      <div class="bubble received d-flex align-items-end turn mt-0"><svg class="tail"><use href="#tail-l"/></svg><p><a class="chat-link" href="#">https://poyraznet.com/basvuru-yap</a></p><div class="stamp">11:18</div></div>
      <div class="bubble received wide d-flex align-items-end"><p>buradan ön başvuru doldurabilirsiniz çağrı</p></div>
    </div>
  </section>

  <div class="jump-btn d-flex align-items-center justify-content-center">
    <svg width="36" height="36" viewBox="0 0 36 36" fill="none" stroke="#8696a0" stroke-width="3.800"><path d="M2.500 7L18 20L33.500 7M2.500 21L18 34L33.500 21"/></svg>
  </div>

  <div class="composer d-flex justify-content-between">
    <div class="entry d-flex align-items-center">
      <svg width="57" height="57" viewBox="0 0 57 57"><circle cx="28.500" cy="28.500" r="28" fill="#8696a0"/><g fill="#1f2c34"><ellipse cx="20" cy="21" rx="4.500" ry="6"/><ellipse cx="37.500" cy="21" rx="4.500" ry="6"/><path d="M10.500 31H46.500Q45 47 28.500 47.500Q12 47 10.500 31Z"/></g><path d="M14 35Q28.500 39 43 35Q28.500 45 14 35Z" fill="#8696a0"/></svg>
      <span class="hint flex-grow-1">Mesaj</span>
      <svg width="58" height="54" viewBox="709 2167 58 54" fill="none" stroke="#8696a0" stroke-width="4.400" stroke-linecap="round"><path d="M741 2174L761 2194Q770 2206 761 2214Q752 2220 742 2213L715 2186Q709 2178 716 2172Q723 2167 731 2173L752 2194Q755 2199 751 2202Q747 2205 742 2201L728 2187"/></svg>
      <svg style="margin-left:65px" width="56" height="54" viewBox="832 2164 56 54"><path d="M838 2174H846L850 2168.500Q852 2166.500 855 2166.500H864Q867 2166.500 869 2168.500L873 2174H880Q887 2175 887 2182V2209Q887 2217 880 2217H840Q832.500 2217 832.500 2209V2182Q832.500 2175 838 2174Z" fill="#8696a0"/><circle cx="859.500" cy="2193.500" r="11.500" fill="none" stroke="#1f2c34" stroke-width="4.500"/></svg>
    </div>
    <div class="mic-btn d-flex align-items-center justify-content-center">
      <svg width="44" height="58" viewBox="982 2165 44 58"><rect x="995.700" y="2166" width="16.500" height="34" rx="8.200" fill="#fff"/><path d="M986.500 2193Q989 2209.500 1004 2209.500T1021.500 2193M1004 2209.500V2220" fill="none" stroke="#fff" stroke-width="5.200" stroke-linecap="round"/></svg>
    </div>
  </div>
</main>

<nav class="sys-nav d-flex align-items-center justify-content-between">
  <svg width="42" height="42"><rect width="42" height="42" rx="7"/></svg>
  <svg width="57" height="57" viewBox="0 0 57 57"><circle cx="28.500" cy="28.500" r="26" fill="none" stroke="#9fa2a5" stroke-width="5"/><circle cx="28.500" cy="28.500" r="15.500"/></svg>
  <svg width="39" height="48" viewBox="0 0 39 48"><path d="M1 22L35 .8Q39-.8 39 2.500V45.500Q39 48.800 35 47.200L1 26Q-.5 24 1 22Z"/></svg>
</nav>
<script>
// wallpaper confetti: rings as x,y,r and stamped shapes as id,x,y,scale,angle
const rings = `41,248,6 84,250,11 169,247,6 70,281,5 65,327,5 61,351,8 99,345,5 111,360,5 104,380,6 125,394,5.5 125,414,3 156,410,8 188,403,5 185,312,5.5 213,314,5 194,330,7.5 205,354,5 232,360,5 229,383,6.5 207,391,5 247,342,10 260,263,7 284,273,5 306,285,10 296,340,6 326,254,6 361,260,5 372,272,4.5 395,251,10 290,246,8 444,245,6 508,257,5 484,317,5 43,435,9 73,442,4.5 113,439,8 106,466,6 121,510,8 152,503,5 36,532,4.5 75,534,7 120,534,4.5 240,453,6 219,488,4 247,483,7 278,494,5.5 296,517,6 272,526,8 379,501,6 394,447,5 418,448,3 419,467,5.5 393,477,4 448,467,4 415,429,6 489,434,4 495,515,6 529,510,5.5 512,489,3.5 468,549,8 397,562,5 461,576,6 545,253,7 1026,326,7 1063,355,7 1075,261,4 644,449,10 1054,447,6.5 868,532,7 698,558,5 866,574,5 887,579,7 960,566,6 991,548,5 986,574,4 999,595,6 874,669,7 902,665,7 907,684,4 977,664,6 989,690,5 782,686,11 749,722,5 774,717,5 791,731,5 702,740,5 736,740,8 901,741,6 1032,730,5 1048,741,6 579,742,10 58,819,6 30,844,7 74,844,9 112,853,5 85,864,6 167,813,5 206,796,12 324,784,5 311,815,9 350,814,4 448,801,6 457,821,5 479,812,5 505,795,9 219,867,6 70,907,5 174,948,7 196,950,7 15,983,5 308,994,5 331,985,7 521,959,8 536,1034,7 122,1063,5 1040,1072,5 1055,915,5 1031,942,7 972,1168,5 1031,1160,9 1051,1175,5 931,1197,9 959,1201,6 657,1228,5 678,1230,7 742,1233,5 750,1291,5 1051,1229,5 1070,1207,5 110,1313,8 14,1320,9 160,1328,6 196,1326,6 240,1324,7 129,1337,5 145,1348,5 12,1364,5 129,1450,6 393,1396,7 412,1414,5 432,1419,5 439,1446,10 492,1443,7 469,1434,4 421,1465,6 428,1496,9 430,1528,5 576,1446,10 609,1438,5 556,1466,5 619,1467,6 567,1485,7 589,1484,3 633,1499,9 247,1532,5 273,1534,8 204,1554,5 226,1548,5 130,1566,7 215,1575,6 77,1585,4 100,1589,6 122,1590,7 65,1605,7 205,1600,5 248,1604,6 139,1619,6 167,1643,5 416,1565,4 468,1570,10 494,1569,5 526,1572,8 486,1587,4 465,1604,6 216,1676,8 227,1696,4 39,1691,7 140,1715,5 161,1735,7 145,1751,6 50,1729,5 83,1733,7 80,1760,10 97,1780,6 50,1787,6 304,1780,8 295,1809,10 278,1828,6 317,1822,5 280,1850,5 489,1827,7 50,1852,5 90,1853,8 1041,1513,5 1067,1633,9 809,1815,5 838,1814,8 933,1857,5 953,1858,5 723,1945,5 786,1950,6 876,1917,6 897,1942,10 955,2032,7 1052,2022,12 27,2063,8 58,2067,6 426,1958,4 291,1956,4 304,1960,4 957,2102,5 798,2124,7 436,2128,5 5,2200,5 3,2264,5 29,2268,5 284,2264,5 335,2267,5 896,2137,5 596,2259,4 945,2243,4`;
const stamps = `star,270,312,.95,15 star,163,373,1.05,0 star,6,416,1,8 star,336,503,1.15,8 star,1062,308,1,12 star,632,557,1.2,-10 spark,473,273,.9,0 spark,270,378,.75,0 spark,240,420,.65,0 spark,95,497,1.05,-12 spark,484,468,.75,4 spark,427,590,1.05,8 spark,3,550,.95,0 spark,771,637,.9,3 cloud,344,313,1,0 cloud,36,488,.78,0 cloud,6,296,1.1,0 cloud,917,542,.9,0 drop,825,542,.8,-10 drop,789,585,.85,5 drop,923,578,.6,-8 heart,870,706,.9,-8 heart,408,288,.9,18 gear,213,274,1,0 heart,370,767,1.1,0 star,146,834,.95,-5 star,270,855,1,0 spark,22,791,1,0 star,413,1058,1.2,8 spark,1023,1120,.95,4 star,532,1340,1,14 star,267,1574,.95,8 star,174,1694,1.25,3 star,304,1736,.9,0 spark,87,1358,.8,0 spark,274,1411,.9,0 spark,902,1878,1.05,0 heart,87,1812,1.2,0 heart,364,1661,.75,0 star,704,1264,1,12 star,4,1978,.9,0 spark,840,2260,.7,0 star,540,970,.9,0`;
document.getElementById('bits').innerHTML =
  rings.split(/\s+/).map(s => { const [x, y, r] = s.split(','); return `<circle cx="${x}" cy="${y}" r="${r}"/>`; }).join('') +
  stamps.split(/\s+/).map(s => { const [id, x, y, k, a] = s.split(','); return `<use href="#${id}" transform="translate(${x} ${y}) scale(${k}) rotate(${a})"/>`; }).join('');
</script>
</body>
</html>
